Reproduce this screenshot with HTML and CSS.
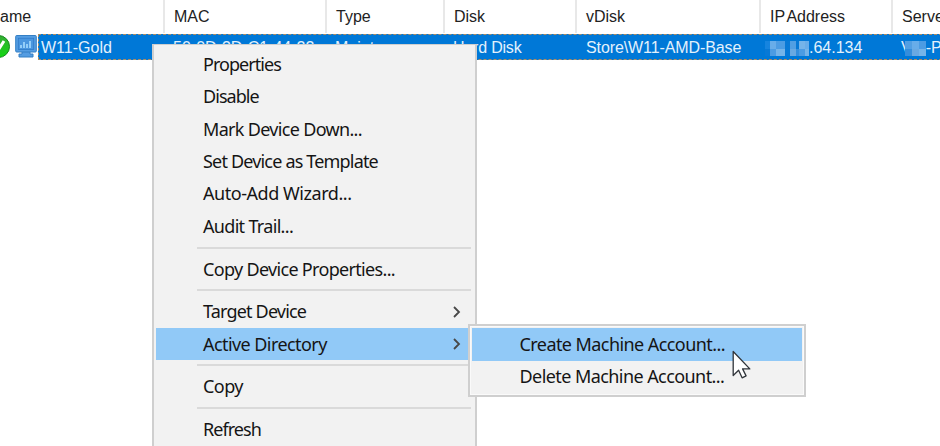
FILE: index.html
```html
<!DOCTYPE html>
<html lang="en">
<head>
<meta charset="utf-8">
<title>Devices</title>
<link rel="stylesheet" href="styles.css">
</head>
<body>
<main class="window">
  <div class="grid header">
    <div class="cell name">ame</div><div class="cell mac">MAC</div><div class="cell">Type</div><div class="cell">Disk</div><div class="cell">vDisk</div><div class="cell ip-head">IP Address</div><div class="cell">Server</div>
  </div>
  <div class="device">
    <div class="icons">
      <svg class="ok" width="11" height="24" viewBox="0 0 11 24"><defs><linearGradient id="green" x2="0" y2="1"><stop stop-color="#35ac35"/><stop offset="1" stop-color="#12d812"/></linearGradient></defs><circle cx="-1.5" cy="12.5" r="11" fill="url(#green)" stroke="#168b1c"/><path d="M-6 12l3.6 5L4 7" fill="none" stroke="#fff" stroke-width="3"/></svg>
      <svg class="monitor" width="22" height="24" viewBox="0 0 22 24"><path d="M7 17h8v3h3v3H4v-3h3z" fill="#559de2" stroke="#347fc4"/><rect x=".7" y="1.5" width="20.6" height="16.5" rx="1" fill="#559de2" stroke="#347fc4"/><rect x="3.3" y="4.2" width="15.4" height="11.3" fill="#4a96df" stroke="#2f7bc8" stroke-width=".8"/><path d="M6 14v-3M9 14V8M12 14v-4M15 14V7" stroke="#9bd3fb" stroke-width="1.8"/></svg>
    </div>
    <div class="grid selected">
      <div class="cell">W11-Gold</div><div class="cell mac">50-0D-3D-C1-44-22</div><div class="cell">Maintenance</div><div class="cell hard">Hard Disk</div><div class="cell vdisk">Store\W11-AMD-Base</div>
      <div class="cell ip"><span class="mosaic"><i class="c1"></i><i class="c3"></i><i class="c5"></i><i class="c8"></i><i class="c2"></i><i class="c8"></i><i class="c6"></i><i class="c3"></i><i class="c8"></i><i class="c5"></i><i class="c6"></i><i class="c8"></i><i class="c7"></i><i class="c4"></i><i class="c5"></i><i class="c6"></i></span>.64.134</div>
      <div class="cell server"><span>V</span><span class="mosaic small"><i class="c2"></i><i class="c3"></i><i class="c5"></i><i class="c4"></i><i class="c7"></i><i class="c6"></i></span>-PVS</div>
    </div>
  </div>
  <nav class="menu main-menu">
    <div class="item"><span class="short">Properties</span></div>
    <div class="item"><span class="short">Disable</span></div>
    <div class="item"><span>Mark Device Down...</span></div>
    <div class="item"><span class="medium">Set Device as Template</span></div>
    <div class="item"><span class="wide">Auto-Add Wizard...</span></div>
    <div class="item"><span>Audit Trail...</span></div>
    <div class="separator"></div>
    <div class="item"><span>Copy Device Properties...</span></div>
    <div class="separator"></div>
    <div class="item"><span class="medium">Target Device</span><svg class="arrow" width="8" height="12" viewBox="0 0 8 12"><path d="M1 1l5 5-5 5"/></svg></div>
    <div class="item active"><span class="loose">Active Directory</span><svg class="arrow" width="8" height="12" viewBox="0 0 8 12"><path d="M1 1l5 5-5 5"/></svg></div>
    <div class="separator"></div>
    <div class="item"><span class="loose">Copy</span></div>
    <div class="separator"></div>
    <div class="item"><span class="short">Refresh</span></div>
  </nav>
  <nav class="menu submenu">
    <div class="item active"><span class="loose">Create Machine Account...</span></div>
    <div class="item"><span class="loose">Delete Machine Account...</span></div>
  </nav>
  <svg class="cursor" width="20" height="30" viewBox="0 0 20 30"><path d="M1.2 1.5v24l5.4-5.2 3.5 7.5 4-1.9-3.5-7h7.2z" fill="#fff" stroke="#30343a" stroke-width="1.3" stroke-linejoin="round"/></svg>
</main>
</body>
</html>
```
FILE: styles.css
```css
* { box-sizing: border-box; }
body { margin: 0; background: #fff; }
.window { position: relative; width: 940px; height: 446px; overflow: hidden; font: 16px "Liberation Sans", sans-serif; color: #222; }
.grid { display: grid; }
.header { height: 34px; grid-template-columns: 165px 162px 118px 132px 184px 132px 48px; }
.cell { white-space: nowrap; overflow: hidden; padding-left: 9px; }
.header .cell { height: 33px; line-height: 33px; border-right: 2px solid #e8e8e8; }
.header .cell:last-child { border: 0; }
.header .name { padding-left: 0; }
.ip-head { word-spacing: -2px; }
.device { display: flex; height: 26px; }
.icons { display: flex; gap: 4px; width: 38px; flex: none; }
.ok { flex: none; }
.monitor { flex: none; }
.selected { width: 904px; flex: none; height: 26px; grid-template-columns: 126px 162px 118px 132px 184px 132px 49px; grid-template-rows: 24px; background: #0078d7; border: 1px dashed #b08c60; color: #e3f1fc; }
.selected .cell { line-height: 26px; }
.selected .cell:first-child { padding-left: 2px; }
.selected .cell:nth-child(2), .selected .cell:nth-child(3) { padding-left: 8px; }
.selected .hard { letter-spacing: -.2px; padding-left: 8px; }
.selected .vdisk { letter-spacing: -.1px; }
.selected .ip, .selected .server { display: flex; align-items: center; height: 26px; padding-left: 8px; }
.selected .ip { padding-left: 4px; }
.mosaic { display: grid; grid-template-columns: 5px 6px 9px 5px 6px 3px 6px 4px; grid-template-rows: 8px 7px; width: 44px; height: 15px; flex: none; }
.small { grid-template-columns: repeat(3, 7px); width: 21px; margin-left: -7px; }
.c1 { background: #1684df; }
.c2 { background: #529fe3; }
.c3 { background: #68ade9; }
.c4 { background: #358edc; }
.c5 { background: #4c9ce3; }
.c6 { background: #75b4e9; }
.c7 { background: #69a9e2; }
.c8 { background: #0879d6; }
.menu { position: absolute; background: #f2f2f2; border: 2px solid #cfcfcf; padding: 2.2px 2px; font: 18px "Noto Sans", sans-serif; color: #151515; }
.main-menu { left: 151.5px; top: 44px; width: 325px; height: 420px; border-top-width: 1px; padding-top: 3.2px; }
.submenu { left: 468px; top: 324px; width: 338px; height: 73px; box-shadow: inset 0 0 0 1px #fafafa; }
.item { display: flex; align-items: center; justify-content: space-between; height: 32.4px; padding: 0 12px 0 47.5px; white-space: nowrap; }
.active { background: #91c9f7; }
.separator { height: 10.3px; margin: 0 2px 0 41px; display: flex; align-items: center; }
.separator::before { content: ""; height: 2px; flex: 1; background: #dadada; }
.arrow path { fill: none; stroke: #484848; stroke-width: 1.8; }
.item span { letter-spacing: -.68px; margin-top: -1px; }
.item .short { letter-spacing: -.95px; }
.item .medium { letter-spacing: -.82px; }
.item .loose { letter-spacing: -.57px; }
.item .wide { letter-spacing: -.45px; }
.cursor { position: absolute; left: 732px; top: 350px; }
```
